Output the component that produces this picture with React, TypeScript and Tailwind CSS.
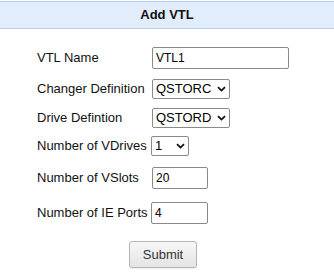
import React, { useState } from "react";

const labelClass = "w-[114px] shrink-0 text-[13px] text-[#111]";
const boxClass =
  "block border border-[#8a8a8a] rounded-[2px] bg-white text-black outline-none font-['Liberation_Sans',Arial,sans-serif]";

function Chevron() {
  return (
    <svg
      width="9"
      height="6"
      viewBox="0 0 9 6"
      className="pointer-events-none absolute right-[4px] top-1/2 -translate-y-1/2"
    >
      <path d="M1 1.2 L4.5 4.6 L8 1.2" fill="none" stroke="#111" strokeWidth="1.8" />
    </svg>
  );
}

function Select({
  value,
  options,
  width,
  onChange,
}: {
  value: string;
  options: string[];
  width: string;
  onChange: (v: string) => void;
}) {
  return (
    <div className={`relative h-[20px] ${width}`}>
      <select
        value={value}
        onChange={(e) => onChange(e.target.value)}
        className={`${boxClass} h-full w-full appearance-none pl-[3px] text-[13px] leading-[18px]`}
      >
        {options.map((o) => (
          <option key={o} value={o}>
            {o}
          </option>
        ))}
      </select>
      <Chevron />
    </div>
  );
}

export default function App() {
  const [form, setForm] = useState({
    name: "VTL1",
    changer: "QSTORC",
    drive: "QSTORD",
    vdrives: "1",
    vslots: "20",
    ieports: "4",
  });

  const set = (k: keyof typeof form) => (v: string) => setForm({ ...form, [k]: v });

  return (
    <div className="min-h-[277px] w-[334px] bg-white font-['Liberation_Sans',Arial,sans-serif]">
      {/* Header */}
      <div className="mt-px flex h-[28px] items-center justify-center border-y border-[#b7d0ee] bg-[#e1edfb] text-[13px] font-bold text-[#111]">
        Add VTL
      </div>

      <form onSubmit={(e) => e.preventDefault()} className="ml-[37px] flex w-[252px] flex-col">
        <div className="mt-[18px] flex items-center">
          <span className={labelClass}>VTL Name</span>
          <input
            value={form.name}
            onChange={(e) => set("name")(e.target.value)}
            className={`${boxClass} ml-px h-[22px] w-[137px] px-[3px] text-[12px]`}
          />
        </div>

        <div className="mt-[10px] flex items-center">
          <span className={labelClass}>Changer Definition</span>
          <div className="ml-px">
            <Select value={form.changer} options={["QSTORC"]} width="w-[78px]" onChange={set("changer")} />
          </div>
        </div>

        <div className="mt-[9px] flex items-center">
          <span className={labelClass}>Drive Defintion</span>
          <div className="ml-px">
            <Select value={form.drive} options={["QSTORD"]} width="w-[78px]" onChange={set("drive")} />
          </div>
        </div>

        <div className="mt-[8px] flex items-center">
          <span className={labelClass}>Number of VDrives</span>
          <Select value={form.vdrives} options={["1", "2", "3", "4"]} width="w-[38px]" onChange={set("vdrives")} />
        </div>

        <div className="mt-[11px] flex items-center">
          <span className={labelClass}>Number of VSlots</span>
          <input
            value={form.vslots}
            onChange={(e) => set("vslots")(e.target.value)}
            className={`${boxClass} ml-px h-[22px] w-[56px] px-[3px] text-[12px]`}
          />
        </div>

        <div className="mt-[13px] flex items-center">
          <span className={labelClass}>Number of IE Ports</span>
          <input
            value={form.ieports}
            onChange={(e) => set("ieports")(e.target.value)}
            className={`${boxClass} h-[22px] w-[57px] px-[3px] text-[12px]`}
          />
        </div>

        <div className="mt-[17px] flex justify-center">
          <button
            type="submit"
            className="h-[27px] w-[68px] rounded-[3px] border border-[#b5b5b5] bg-gradient-to-b from-[#f7f7f7] to-[#e4e4e4] text-[13px] text-[#333] shadow-[0_1px_1px_rgba(0,0,0,0.08)]"
          >
            Submit
          </button>
        </div>
      </form>
    </div>
  );
}
